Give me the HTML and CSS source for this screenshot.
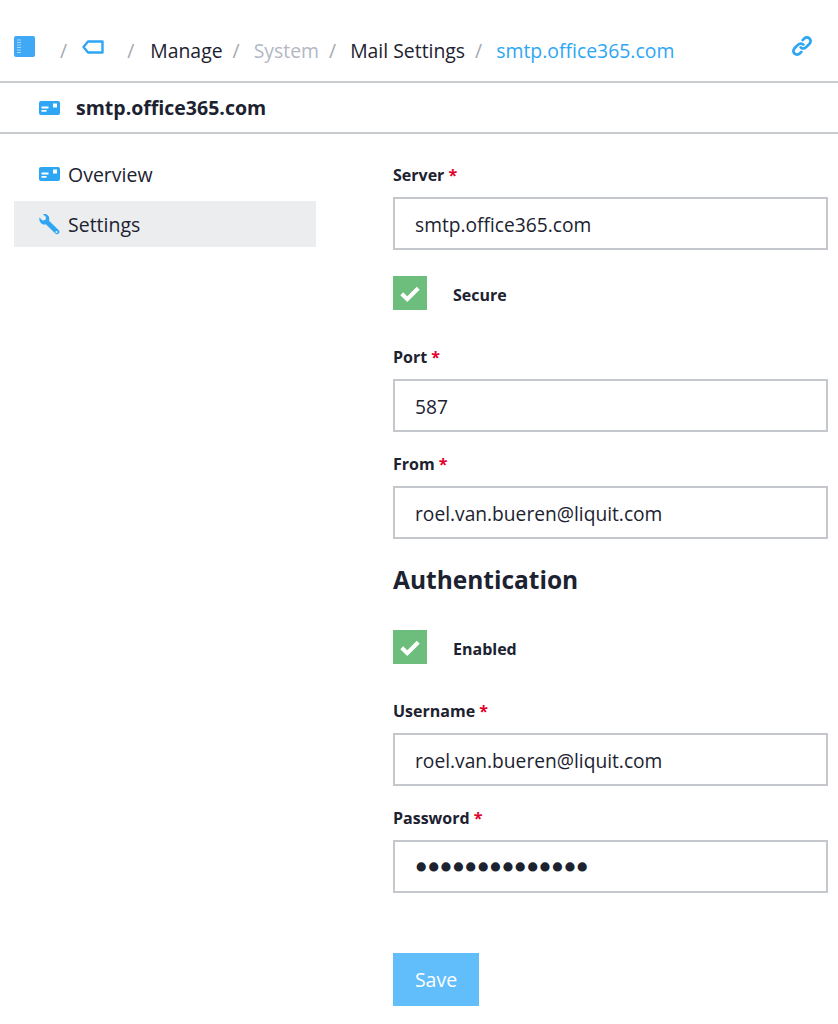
FILE: index.html
```html
<!DOCTYPE html>
<html lang="en">
<head>
    <meta charset="UTF-8">
    <meta name="viewport" content="width=device-width, initial-scale=1.0">
    <title>smtp.office365.com - Mail Settings</title>
    <link rel="stylesheet" href="styles.css">
</head>
<body>
    <nav class="topbar">
        <svg class="icon-book" viewBox="0 0 21 21"><rect width="21" height="21" rx="2" fill="#3fa9f5"/><path d="M3 4h4M3 6.500h4M3 9h4M3 11.500h4M3 14h4M3 16.500h4" stroke="#fff" stroke-width=".7" opacity=".8"/></svg>
        <span class="sep sep-first">/</span>
        <svg class="icon-tag" viewBox="0 0 22 14"><path d="M6 1.500h14.500v11H6L1.500 7z" fill="none" stroke="#2ea6f4" stroke-width="2.400" stroke-linejoin="round"/></svg>
        <span class="sep sep-second">/</span>
        <a class="crumb">Manage</a>
        <span class="sep">/</span>
        <a class="crumb muted">System</a>
        <span class="sep">/</span>
        <a class="crumb">Mail Settings</a>
        <span class="sep">/</span>
        <a class="crumb current">smtp.office365.com</a>
        <svg class="icon-link" viewBox="0 0 24 24" fill="none" stroke="#2ea6f4" stroke-width="3" stroke-linecap="round"><path d="M10.500 13.500a4 4 0 0 0 5.700 0l4-4a4 4 0 0 0-5.700-5.700l-1.800 1.800"/><path d="M13.500 10.500a4 4 0 0 0-5.700 0l-4 4a4 4 0 0 0 5.700 5.700l1.800-1.800"/></svg>
    </nav>

    <header class="page-head">
        <svg class="icon-card" viewBox="0 0 21 14"><rect width="21" height="14" rx="2" fill="#2ea6f4"/><path d="M2.500 6.500h7M2.500 9.800h5" stroke="#fff" stroke-width="1.800"/><rect x="14" y="2.500" width="4" height="4" fill="#fff"/></svg>
        <h1>smtp.office365.com</h1>
    </header>

    <main class="content">
        <aside class="sidebar">
            <a class="side-item">
                <svg class="icon-card" viewBox="0 0 21 14"><rect width="21" height="14" rx="2" fill="#2ea6f4"/><path d="M2.500 6.500h7M2.500 9.800h5" stroke="#fff" stroke-width="1.800"/><rect x="14" y="2.500" width="4" height="4" fill="#fff"/></svg>
                Overview
            </a>
            <a class="side-item active">
                <svg class="icon-wrench" viewBox="0 0 21 21"><path d="M.5 3.500 3.500 6.500 6.500 6 7 3 4 .3C7-.6 10.500 1.500 10.300 5.200c0 .6-.1 1-.3 1.500l9.800 9.500c2.200 2.200-1.300 5.600-3.500 3.400L6.800 10.300C3.500 11.300-.5 8 .5 3.500z" fill="#2ea6f4"/><circle cx="17.500" cy="18" r="1.100" fill="#ebedef"/></svg>
                Settings
            </a>
        </aside>

        <form class="settings-form">
            <div class="field">
                <label>Server <em>*</em></label>
                <input type="text" value="smtp.office365.com">
            </div>
            <div class="check-row">
                <span class="check"><svg viewBox="0 0 16 16"><path d="M2 8.500 6 12.500 14 4.500" fill="none" stroke="#fff" stroke-width="3"/></svg></span>
                <span class="check-label">Secure</span>
            </div>
            <div class="field">
                <label>Port <em>*</em></label>
                <input type="text" value="587">
            </div>
            <div class="field">
                <label>From <em>*</em></label>
                <input type="text" value="roel.van.bueren@liquit.com">
            </div>
            <h2>Authentication</h2>
            <div class="check-row">
                <span class="check"><svg viewBox="0 0 16 16"><path d="M2 8.500 6 12.500 14 4.500" fill="none" stroke="#fff" stroke-width="3"/></svg></span>
                <span class="check-label">Enabled</span>
            </div>
            <div class="field">
                <label>Username <em>*</em></label>
                <input type="text" value="roel.van.bueren@liquit.com">
            </div>
            <div class="field">
                <label>Password <em>*</em></label>
                <input class="password" type="password" value="12345678901234">
            </div>
            <button class="save-button" type="button">Save</button>
        </form>
    </main>
</body>
</html>
```

FILE: styles.css
```css
* {
    margin: 0;
    padding: 0;
    box-sizing: border-box;
    font-family: 'Open Sans', 'Noto Sans', sans-serif;
}

body {
    background: #fff;
    color: #1c2230;
    width: 838px;
    height: 1024px;
    overflow: hidden;
}

.topbar {
    height: 83px;
    padding: 20px 25px 0 14px;
    display: flex;
    align-items: center;
    font-size: 19.400px;
    border-bottom: 2px solid #c9cccf;
}

.icon-book {
    width: 21px;
    height: 21px;
    margin-top: -8px;
}

.icon-tag {
    width: 22px;
    height: 14px;
    margin-top: -8px;
}

.sep {
    color: #a5a9af;
    margin: 0 14px 0 10px;
}

.sep-first {
    margin: 0 15px 0 25px;
}

.sep-second {
    margin: 0 16px 0 23px;
}

.crumb.muted {
    color: #b3b8c2;
}

.crumb.current {
    color: #2ea6f4;
}

.icon-link {
    width: 22px;
    height: 22px;
    margin: -10px 0 0 auto;
}

.page-head {
    height: 51px;
    padding-left: 39px;
    display: flex;
    align-items: center;
    gap: 16px;
    border-bottom: 2px solid #c9cccf;
}

.page-head h1 {
    font-size: 19.500px;
    font-weight: 700;
}

.icon-card {
    width: 21px;
    height: 14px;
    flex: none;
}

.content {
    display: flex;
    padding: 14px 10px 0 14px;
}

.sidebar {
    width: 302px;
    margin-right: 77px;
    padding-top: 3px;
}

.side-item {
    height: 46px;
    padding-left: 25px;
    margin-bottom: 4px;
    display: flex;
    align-items: center;
    gap: 8px;
    font-size: 19.500px;
}

.side-item .icon-card {
    margin-top: 0;
}

.side-item.active {
    background: #ebedef;
}

.icon-wrench {
    width: 21px;
    height: 21px;
    margin-top: 1px;
    flex: none;
}

.settings-form {
    width: 435px;
    padding-top: 16px;
}

.field {
    margin-bottom: 21px;
}

.field label {
    display: block;
    font-size: 16px;
    font-weight: 700;
    line-height: 22px;
    margin-bottom: 11px;
}

.field em {
    color: #e3002b;
    font-style: normal;
}

.field input {
    display: block;
    width: 100%;
    height: 53px;
    padding: 2px 20px 0;
    border: 2px solid #c4c7cb;
    font-size: 19.200px;
    color: #1c2230;
    background: #fff;
    outline: none;
}

.field .password {
    padding-top: 3px;
    font-family: 'DejaVu Sans', sans-serif;
    font-size: 21px;
    -webkit-text-stroke: 3px #1c2230;
}

.check-row {
    display: flex;
    align-items: center;
    gap: 26px;
    height: 35px;
    margin: 25px 0 36px;
    font-size: 16px;
    font-weight: 700;
}

.check-label {
    margin-top: 4px;
}

.check {
    width: 34px;
    height: 34px;
    background: #6dbd7d;
    display: flex;
    align-items: center;
    justify-content: center;
}

.check svg {
    width: 22px;
    height: 22px;
}

h2 {
    font-size: 24.500px;
    font-weight: 700;
    line-height: 34px;
    margin: 24px 0 32px;
}

.save-button {
    display: block;
    width: 86px;
    height: 53px;
    margin-top: 60px;
    background: #62bdfb;
    border: none;
    color: #fff;
    font-size: 19.500px;
}
```
